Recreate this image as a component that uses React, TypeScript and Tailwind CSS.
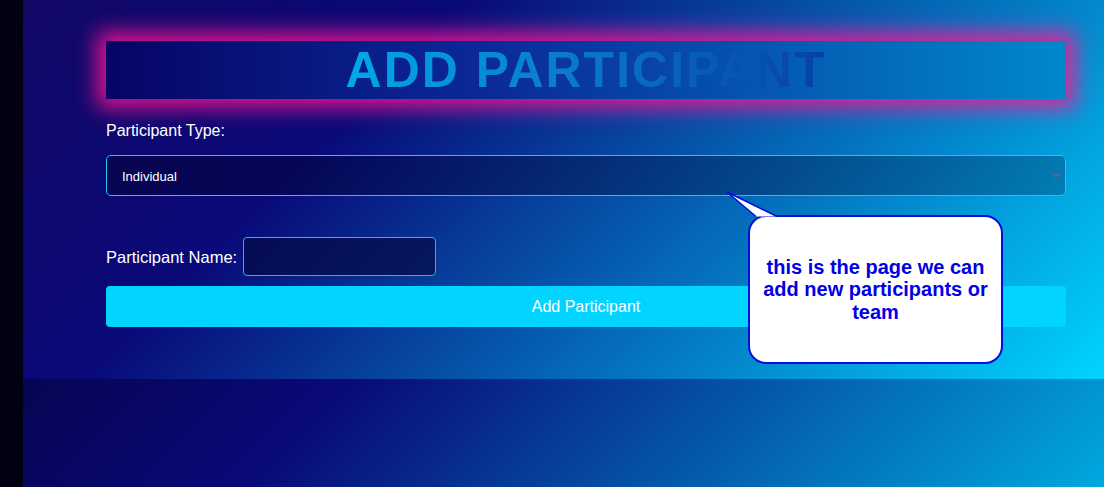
import React from "react";

export default function App() {
  return (
    <div className="flex h-[487px] w-[1104px] overflow-hidden" style={{ fontFamily: '"Liberation Sans", Arial, sans-serif' }}>
      <div className="w-[23px] shrink-0 bg-[#020112]" />
      <div className="flex flex-1 flex-col bg-[linear-gradient(135deg,#020024_0%,#090979_45%,#00a8e0_100%)]">
        <div className="relative h-[379px] shrink-0 bg-[linear-gradient(135deg,#120866_0%,#090979_30%,#00d4ff_100%)] pl-[83px] pr-[38px] pt-[41px]">
          <div className="flex h-[58px] items-center justify-center bg-[linear-gradient(90deg,#060466_0%,#0a2a98_40%,#0088cc_100%)] shadow-[0_0_20px_9px_rgba(255,20,147,0.85)]">
            <h1 className="bg-[linear-gradient(90deg,#00a8e8_0%,#0a7ccc_45%,#0640a8_100%)] bg-clip-text text-[50px] font-bold leading-none tracking-[2px] text-transparent">
              ADD PARTICIPANT
            </h1>
          </div>
          <label className="mt-[23px] block text-[16px] leading-[18px] text-white">Participant Type:</label>
          <div className="relative mt-[15px] h-[41px] rounded-[5px] border border-[#19c6f4] bg-[linear-gradient(90deg,rgba(0,0,40,0.45)_0%,rgba(0,0,40,0.25)_100%)]">
            <span className="absolute left-[15px] top-[13px] text-[13px] leading-[15px] text-white">Individual</span>
            <svg className="absolute right-[5px] top-[16px]" width="8" height="6" viewBox="0 0 8 6">
              <path d="M1 1.5 L4 4.5 L7 1.5" fill="none" stroke="#7a6a6a" strokeWidth="1.3" />
            </svg>
          </div>
          <div className="mt-[41px] flex items-center gap-[6px]">
            <span className="text-[16.5px] leading-[18px] text-white">Participant Name:</span>
            <div className="h-[39px] w-[193px] rounded-[4px] border border-[#19b8f0] bg-[rgba(5,10,70,0.7)]" />
          </div>
          <button className="mt-[10px] flex h-[41px] w-full items-center justify-center rounded-[4px] bg-[#00d4ff] text-[16px] text-white">
            Add Participant
          </button>
          <div className="absolute left-[725px] top-[215px] flex h-[149px] w-[255px] items-center justify-center rounded-[18px] border-2 border-[#0010d8] bg-white px-[8px] text-center text-[20px] font-bold leading-[22.5px] text-[#0000e6]">
            this is the page we can add new participants or team
          </div>
          <svg className="absolute left-[702px] top-[190px]" width="60" height="30" viewBox="0 0 60 30">
            <polygon points="2,2 52,26.5 31,26.5" fill="white" />
            <path d="M31 26.5 L2 2 L52 26.5" fill="none" stroke="#0010d8" strokeWidth="1.5" />
          </svg>
        </div>
      </div>
    </div>
  );
}
